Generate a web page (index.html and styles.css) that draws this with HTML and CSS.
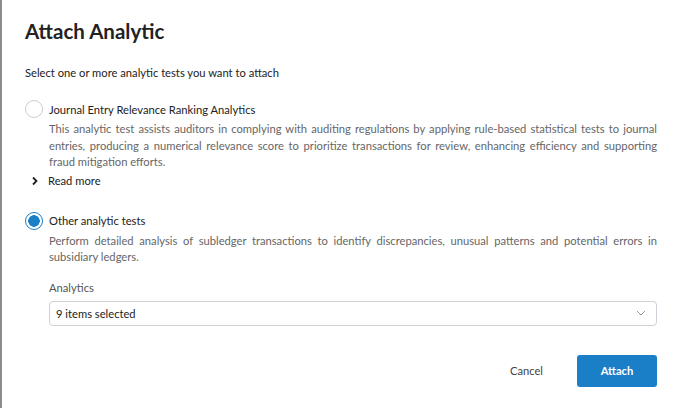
FILE: index.html
```html
<!DOCTYPE html>
<html>
<head>
<meta charset="utf-8">
<link rel="stylesheet" href="styles.css">
</head>
<body>
<div class="dialog">
  <h1 class="title">Attach Analytic</h1>
  <p class="intro">Select one or more analytic tests you want to attach</p>

  <div class="option">
    <div class="option-head">
      <span class="radio"></span>
      <span class="option-label">Journal Entry Relevance Ranking Analytics</span>
    </div>
    <p class="desc">This analytic test assists auditors in complying with auditing regulations by applying rule-based statistical tests to journal entries, producing a numerical relevance score to prioritize transactions for review, enhancing efficiency and supporting fraud mitigation efforts.</p>
    <div class="readmore">
      <svg class="chev" width="8" height="10" viewBox="0 0 8 10"><path d="M2 1.5 L5.5 5 L2 8.5" fill="none" stroke="#222" stroke-width="1.8"/></svg>
      <span>Read more</span>
    </div>
  </div>

  <div class="option option-second">
    <div class="option-head">
      <span class="radio radio-on"></span>
      <span class="option-label">Other analytic tests</span>
    </div>
    <p class="desc">Perform detailed analysis of subledger transactions to identify discrepancies, unusual patterns and potential errors in subsidiary ledgers.</p>
    <div class="field">
      <div class="field-label">Analytics</div>
      <div class="select">
        <span>9 items selected</span>
        <svg width="10" height="6" viewBox="0 0 10 6"><path d="M1 1 L5 5 L9 1" fill="none" stroke="#999" stroke-width="1"/></svg>
      </div>
    </div>
  </div>

  <div class="actions">
    <button class="btn-cancel">Cancel</button>
    <button class="btn-primary">Attach</button>
  </div>
</div>
</body>
</html>
```
FILE: styles.css
```css
html, body {
  margin: 0;
  padding: 0;
  background: #fff;
}
body {
  font-family: Lato, "Liberation Sans", sans-serif;
  color: #222;
  width: 681px;
  height: 411px;
  overflow: hidden;
  position: relative;
}
body::before {
  content: "";
  position: absolute;
  left: 0;
  top: 0;
  width: 2px;
  height: 408px;
  background: #8c8c8c;
}
.dialog {
  padding: 17px 24px 0 25px;
}
.title {
  margin: 0;
  font-size: 20.5px;
  font-weight: 700;
  line-height: 28px;
  color: #222;
}
.intro {
  margin: 20px 0 0;
  font-size: 11.2px;
  line-height: 16px;
  color: #222;
}
.option {
  margin-top: 19px;
}
.option-head {
  display: flex;
  align-items: center;
  gap: 6px;
  height: 18px;
}
.radio {
  box-sizing: border-box;
  width: 18px;
  height: 18px;
  border-radius: 50%;
  border: 1px solid #c9ced6;
  background: #fff;
  flex: none;
}
.radio-on {
  border: 1.5px solid #1a7fc7;
  background: radial-gradient(circle, #1a7fc7 0 5.5px, #fff 6px);
}
.option-label {
  font-size: 11.2px;
  color: #222;
}
.desc {
  margin: 3px 0 0 24px;
  font-size: 11.2px;
  line-height: 16.5px;
  color: #666;
  text-align: justify;
}
.readmore {
  display: flex;
  align-items: center;
  gap: 9px;
  margin: 2px 0 0 6px;
  font-size: 11.2px;
  line-height: 16px;
}
.chev {
  flex: none;
}
.option-second {
  margin-top: 23px;
}
.field {
  margin: 14px 0 0 24px;
}
.field-label {
  font-size: 11.2px;
  line-height: 16px;
  color: #555;
}
.select {
  box-sizing: border-box;
  margin-top: 5px;
  height: 25px;
  border: 1px solid #cdd1d8;
  border-radius: 4px;
  display: flex;
  align-items: center;
  justify-content: space-between;
  padding: 0 10px 0 6px;
  font-size: 11.2px;
  color: #222;
}
.actions {
  display: flex;
  justify-content: flex-end;
  align-items: center;
  gap: 34px;
  margin-top: 29px;
}
.btn-cancel {
  border: none;
  background: none;
  font-family: inherit;
  font-size: 11.2px;
  color: #444;
  padding: 0;
}
.btn-primary {
  width: 80px;
  height: 32px;
  border: none;
  border-radius: 3px;
  background: #1a7fc7;
  color: #fff;
  font-family: inherit;
  font-size: 11.2px;
  font-weight: 700;
}
```
